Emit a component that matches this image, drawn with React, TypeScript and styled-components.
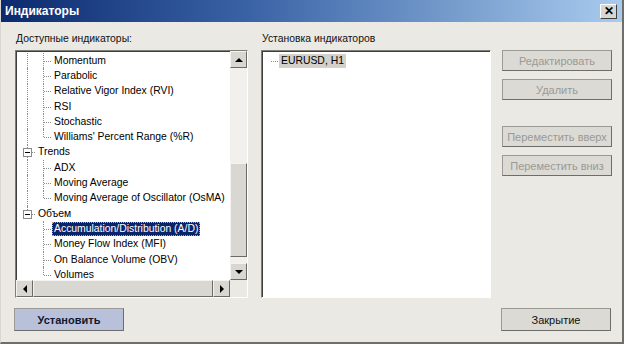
import React from "react";
import styled, { createGlobalStyle } from "styled-components";

const Global = createGlobalStyle`
  html, body { margin: 0; padding: 0; background: #ffffff; }
  body { font-family: "Liberation Sans", Arial, sans-serif; font-size: 10px; color: #000; }
  * { box-sizing: border-box; }
`;

const Window = styled.div`
  width: 624px;
  height: 344px;
  display: flex;
  flex-direction: column;
  background: #ebe9e3;
  border-right: 2px solid #6f6e6a;
  border-bottom: 2px solid #6f6e6a;
  border-left: 1px solid #d9d7d0;
`;

const TitleBar = styled.div`
  height: 22px;
  display: flex;
  align-items: center;
  justify-content: space-between;
  padding: 0 5px 0 4px;
  background: linear-gradient(90deg, #0c2a6e 0%, #3a63a6 40%, #7aa0cf 75%, #a9cbef 100%);
  color: #fff;
  font-weight: bold;
  font-size: 12px;
`;

const CloseBtn = styled.div`
  width: 17px;
  height: 15px;
  background: #d8d6d0;
  border: 1px solid;
  border-color: #fff #404040 #404040 #fff;
  display: flex;
  align-items: center;
  justify-content: center;
  color: #000;
  font-size: 12px;
  font-weight: bold;
  line-height: 1;
`;

const Body = styled.div`
  flex: 1;
  display: flex;
  flex-direction: column;
  padding: 11px 12px 11px 14px;
`;

const Columns = styled.div`
  display: grid;
  grid-template-columns: 233px 230px 108px;
  column-gap: 13px;
  height: 265px;
  & > :nth-child(3) {
    margin-left: -2px;
  }
`;

const Column = styled.div`
  display: flex;
  flex-direction: column;
  min-height: 0;
`;

const Label = styled.div`
  height: 17px;
  padding-left: 1px;
  font-size: 10.4px;
  color: #111;
`;

const SunkenBox = styled.div`
  flex: 1;
  display: flex;
  flex-direction: column;
  background: #fff;
  border: 1px solid;
  border-color: #7f7d77 #ffffff #ffffff #7f7d77;
  box-shadow: inset 1px 1px 0 #3f3e3b;
  min-height: 0;
  overflow: hidden;
`;

const TreeArea = styled.div`
  flex: 1;
  display: flex;
  min-height: 0;
`;

const TreeList = styled.div`
  flex: 1;
  padding: 2px 0 0 3px;
  overflow: hidden;
`;

const Row = styled.div`
  height: 15.3px;
  display: flex;
  align-items: stretch;
  white-space: nowrap;
`;

const Cell = styled.div<{ $v: "none" | "full" | "top"; $h?: boolean }>`
  position: relative;
  width: 16px;
  flex: none;
  &::before {
    content: "";
    display: ${(p) => (p.$v === "none" ? "none" : "block")};
    position: absolute;
    left: 8px;
    top: 0;
    height: ${(p) => (p.$v === "full" ? "100%" : "50%")};
    border-left: 1px dotted #8c8c8c;
  }
  &::after {
    content: "";
    display: ${(p) => (p.$h ? "block" : "none")};
    position: absolute;
    left: 9px;
    right: 0;
    top: 50%;
    border-top: 1px dotted #8c8c8c;
  }
`;

const Expander = styled.div`
  position: absolute;
  left: 4px;
  top: 50%;
  margin-top: -4px;
  width: 9px;
  height: 9px;
  border: 1px solid #8a8a8a;
  background: #fff;
  z-index: 1;
  &::after {
    content: "";
    position: absolute;
    left: 1px;
    right: 1px;
    top: 3px;
    border-top: 1px solid #000;
  }
`;

const ItemText = styled.span<{ $sel?: boolean; $gray?: boolean }>`
  align-self: center;
  padding: 1px 2px 1px 2px;
  margin-left: 1px;
  font-size: 10.4px;
  line-height: 12px;
  color: ${(p) => (p.$sel ? "#fff" : "#000")};
  background: ${(p) => (p.$sel ? "#0a246a" : p.$gray ? "#d4d1ca" : "transparent")};
  outline: ${(p) => (p.$sel ? "1px dotted #c8a86a" : "none")};
  outline-offset: -1px;
`;

const VScroll = styled.div`
  width: 17px;
  display: flex;
  flex-direction: column;
  background: #f1f0ec;
`;

const HScroll = styled.div`
  height: 17px;
  display: flex;
  background: #f1f0ec;
`;

const ScrollBtn = styled.div`
  width: 17px;
  height: 17px;
  flex: none;
  background: #d9d7d1;
  border: 1px solid;
  border-color: #f4f3f0 #6b6a66 #6b6a66 #f4f3f0;
  display: flex;
  align-items: center;
  justify-content: center;
`;

const Track = styled.div`
  flex: 1;
  display: flex;
  flex-direction: column;
`;

const HTrack = styled.div`
  flex: 1;
  display: flex;
`;

const Thumb = styled.div<{ $grow?: number }>`
  background: #d9d7d1;
  border: 1px solid;
  border-color: #f4f3f0 #6b6a66 #6b6a66 #f4f3f0;
  flex: ${(p) => p.$grow ?? 1};
`;

const Spacer = styled.div<{ $grow: number }>`
  flex: ${(p) => p.$grow};
`;

const Corner = styled.div`
  width: 17px;
  background: #ebe9e3;
`;

const Arrow = styled.div<{ $dir: "up" | "down" | "left" | "right" }>`
  width: 0;
  height: 0;
  ${(p) =>
    p.$dir === "up"
      ? "border-left: 4px solid transparent; border-right: 4px solid transparent; border-bottom: 4px solid #000;"
      : p.$dir === "down"
      ? "border-left: 4px solid transparent; border-right: 4px solid transparent; border-top: 4px solid #000;"
      : p.$dir === "left"
      ? "border-top: 4px solid transparent; border-bottom: 4px solid transparent; border-right: 4px solid #000;"
      : "border-top: 4px solid transparent; border-bottom: 4px solid transparent; border-left: 4px solid #000;"}
`;

const InstalledList = styled.div`
  padding: 2px 0 0 0;
`;

const ButtonCol = styled.div`
  display: flex;
  flex-direction: column;
  padding-top: 17px;
`;

const Button = styled.div<{ $disabled?: boolean; $primary?: boolean; $gapTop?: number }>`
  height: 21px;
  margin-top: ${(p) => p.$gapTop ?? 0}px;
  display: flex;
  align-items: center;
  justify-content: center;
  font-size: 11px;
  background: ${(p) => (p.$primary ? "#b8c0da" : "#dcdad4")};
  border: 1px solid;
  border-color: #9c9a95 #6e6d69 #6e6d69 #9c9a95;
  color: ${(p) => (p.$disabled ? "#9a9994" : p.$primary ? "#101830" : "#111")};
  font-weight: ${(p) => (p.$primary ? "bold" : "normal")};
`;

const Footer = styled.div`
  display: flex;
  justify-content: space-between;
  margin: 10px -1px 0 -1px;
`;

const FooterButton = styled(Button)`
  width: 110px;
  height: 23px;
`;

type V = "none" | "full" | "top";
type Item = {
  label: string;
  cells: { v: V; h?: boolean; box?: boolean }[];
  sel?: boolean;
};

const leaf = (parentCont: boolean, last: boolean, label: string, sel?: boolean): Item => ({
  label,
  sel,
  cells: [{ v: parentCont ? "full" : "none" }, { v: last ? "top" : "full", h: true }],
});

const items: Item[] = [
  leaf(true, false, "Momentum"),
  leaf(true, false, "Parabolic"),
  leaf(true, false, "Relative Vigor Index (RVI)"),
  leaf(true, false, "RSI"),
  leaf(true, false, "Stochastic"),
  leaf(true, true, "Williams' Percent Range (%R)"),
  { label: "Trends", cells: [{ v: "full", h: true, box: true }] },
  leaf(true, false, "ADX"),
  leaf(true, false, "Moving Average"),
  leaf(true, true, "Moving Average of Oscillator (OsMA)"),
  { label: "Объем", cells: [{ v: "top", h: true, box: true }] },
  leaf(false, false, "Accumulation/Distribution (A/D)", true),
  leaf(false, false, "Money Flow Index (MFI)"),
  leaf(false, false, "On Balance Volume (OBV)"),
  leaf(false, true, "Volumes"),
];

export default function App() {
  return (
    <>
      <Global />
      <Window>
        <TitleBar>
          <span>Индикаторы</span>
          <CloseBtn>✕</CloseBtn>
        </TitleBar>
        <Body>
          <Columns>
            <Column>
              <Label>Доступные индикаторы:</Label>
              <SunkenBox>
                <TreeArea>
                  <TreeList>
                    {items.map((it, i) => (
                      <Row key={i}>
                        {it.cells.map((c, j) => (
                          <Cell key={j} $v={c.v} $h={c.h}>
                            {c.box && <Expander />}
                          </Cell>
                        ))}
                        <ItemText $sel={it.sel}>{it.label}</ItemText>
                      </Row>
                    ))}
                  </TreeList>
                  <VScroll>
                    <ScrollBtn>
                      <Arrow $dir="up" />
                    </ScrollBtn>
                    <Track>
                      <Spacer $grow={96} />
                      <Thumb $grow={94} />
                      <Spacer $grow={6} />
                    </Track>
                    <ScrollBtn>
                      <Arrow $dir="down" />
                    </ScrollBtn>
                  </VScroll>
                </TreeArea>
                <HScroll>
                  <ScrollBtn>
                    <Arrow $dir="left" />
                  </ScrollBtn>
                  <HTrack>
                    <Thumb $grow={1} />
                  </HTrack>
                  <ScrollBtn>
                    <Arrow $dir="right" />
                  </ScrollBtn>
                  <Corner />
                </HScroll>
              </SunkenBox>
            </Column>
            <Column>
              <Label>Установка индикаторов</Label>
              <SunkenBox>
                <InstalledList>
                  <Row>
                    <Cell $v="none" $h />
                    <ItemText $gray>EURUSD, H1</ItemText>
                  </Row>
                </InstalledList>
              </SunkenBox>
            </Column>
            <ButtonCol>
              <Button $disabled>Редактировать</Button>
              <Button $disabled $gapTop={8}>Удалить</Button>
              <Button $disabled $gapTop={26}>Переместить вверх</Button>
              <Button $disabled $gapTop={8}>Переместить вниз</Button>
            </ButtonCol>
          </Columns>
          <Footer>
            <FooterButton $primary>Установить</FooterButton>
            <FooterButton>Закрытие</FooterButton>
          </Footer>
        </Body>
      </Window>
    </>
  );
}
